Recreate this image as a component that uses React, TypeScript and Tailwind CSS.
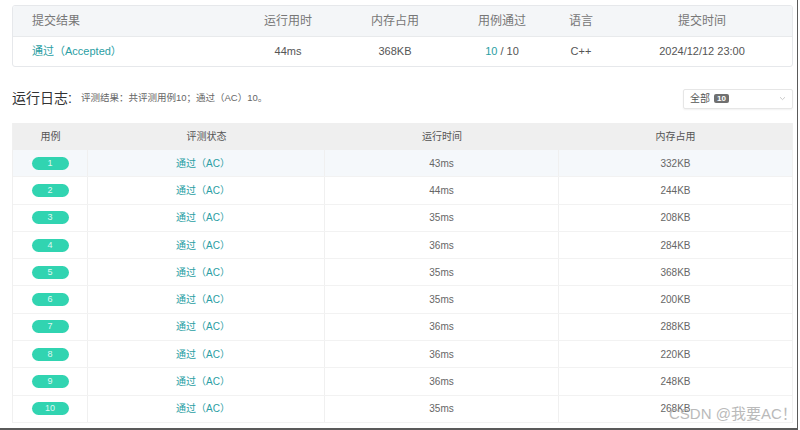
import React from "react";

const font = { fontFamily: '"Liberation Sans", "Noto Sans CJK SC", sans-serif' };

const rows = [
  { id: 1, time: "43ms", mem: "332KB" },
  { id: 2, time: "44ms", mem: "244KB" },
  { id: 3, time: "35ms", mem: "208KB" },
  { id: 4, time: "36ms", mem: "284KB" },
  { id: 5, time: "35ms", mem: "368KB" },
  { id: 6, time: "35ms", mem: "200KB" },
  { id: 7, time: "36ms", mem: "288KB" },
  { id: 8, time: "36ms", mem: "220KB" },
  { id: 9, time: "36ms", mem: "248KB" },
  { id: 10, time: "35ms", mem: "268KB" },
];

export default function App() {
  return (
    <div style={font} className="relative w-[800px] h-[430px] bg-white overflow-hidden">
      <div className="w-[798px] h-[430px] border-r border-b-2 border-[#5a5a5a] pt-[5px] pl-[12px]">
        {/* Submission summary card */}
        <div className="w-[781px] border border-[#e6e8eb] rounded-[3px] overflow-hidden">
          <div className="flex h-[31px] items-center bg-[#f4f6f8] border-b border-[#e8eaec] text-[12px] text-[#777]">
            <div className="w-[227px] pl-[19px]">提交结果</div>
            <div className="w-[96px] text-center">运行用时</div>
            <div className="w-[118px] text-center">内存占用</div>
            <div className="w-[96px] text-center">用例通过</div>
            <div className="w-[62px] text-center">语言</div>
            <div className="flex-1 text-center">提交时间</div>
          </div>
          <div className="flex h-[29px] items-center text-[11px] text-[#555]">
            <div className="w-[227px] pl-[19px] text-[#2a9ea3]">通过（Accepted）</div>
            <div className="w-[96px] text-center">44ms</div>
            <div className="w-[118px] text-center">368KB</div>
            <div className="w-[96px] text-center">
              <span className="text-[#2a9ea3]">10</span> / 10
            </div>
            <div className="w-[62px] text-center">C++</div>
            <div className="flex-1 text-center">2024/12/12 23:00</div>
          </div>
        </div>

        {/* Log header */}
        <div className="flex items-center w-[781px] mt-[21px] h-[21px]">
          <span className="text-[14px] text-[#333]">运行日志:</span>
          <span className="ml-[9px] text-[9.5px] text-[#666]">评测结果：共评测用例10；通过（AC）10。</span>
          <div className="ml-auto flex items-center w-[110px] h-[20px] border border-[#e6e6e6] rounded-[2px] shadow-[0_1px_2px_rgba(0,0,0,0.06)] px-[6px]">
            <span className="text-[10px] text-[#555]">全部</span>
            <span className="ml-[4px] px-[3px] h-[9px] leading-[9px] rounded-[2px] bg-[#707070] text-white text-[8px] font-bold">10</span>
            <svg className="ml-auto" width="7" height="5" viewBox="0 0 7 5">
              <path d="M1 1.2 L3.5 3.6 L6 1.2" fill="none" stroke="#cccccc" strokeWidth="1" />
            </svg>
          </div>
        </div>

        {/* Test cases table */}
        <div className="w-[781px] mt-[14px] border-l border-r border-[#f0f0f0] text-[10px]">
          <div className="flex h-[27px] items-center bg-[#efefef] text-[#555]">
            <div className="w-[75px] text-center">用例</div>
            <div className="w-[237px] text-center">评测状态</div>
            <div className="w-[234px] text-center">运行时间</div>
            <div className="flex-1 text-center">内存占用</div>
          </div>
          {rows.map((r, i) => (
            <div
              key={r.id}
              className={
                i === 0
                  ? "flex h-[27.3px] items-stretch bg-[#f5f8fb] border-b border-[#f2f2f2]"
                  : "flex h-[27.3px] items-stretch border-b border-[#f2f2f2]"
              }
            >
              <div className="w-[75px] flex items-center justify-center border-r border-[#f0f0f0]">
                <span className="w-[37px] h-[13px] rounded-full bg-[#31d4b1] text-[#dff8f1] text-[9px] leading-[13px] text-center">
                  {r.id}
                </span>
              </div>
              <div className="w-[237px] flex items-center justify-center border-r border-[#f0f0f0] text-[#2a9ea3] pr-[6px]">
                通过（AC）
              </div>
              <div className="w-[234px] flex items-center justify-center border-r border-[#f0f0f0] text-[#666]">
                {r.time}
              </div>
              <div className="flex-1 flex items-center justify-center text-[#666]">{r.mem}</div>
            </div>
          ))}
        </div>
      </div>

      {/* watermark */}
      <div className="absolute left-[669px] top-[403px] whitespace-nowrap text-[15px] text-[#aaaaaa] opacity-80">
        CSDN @我要AC！
      </div>
    </div>
  );
}
